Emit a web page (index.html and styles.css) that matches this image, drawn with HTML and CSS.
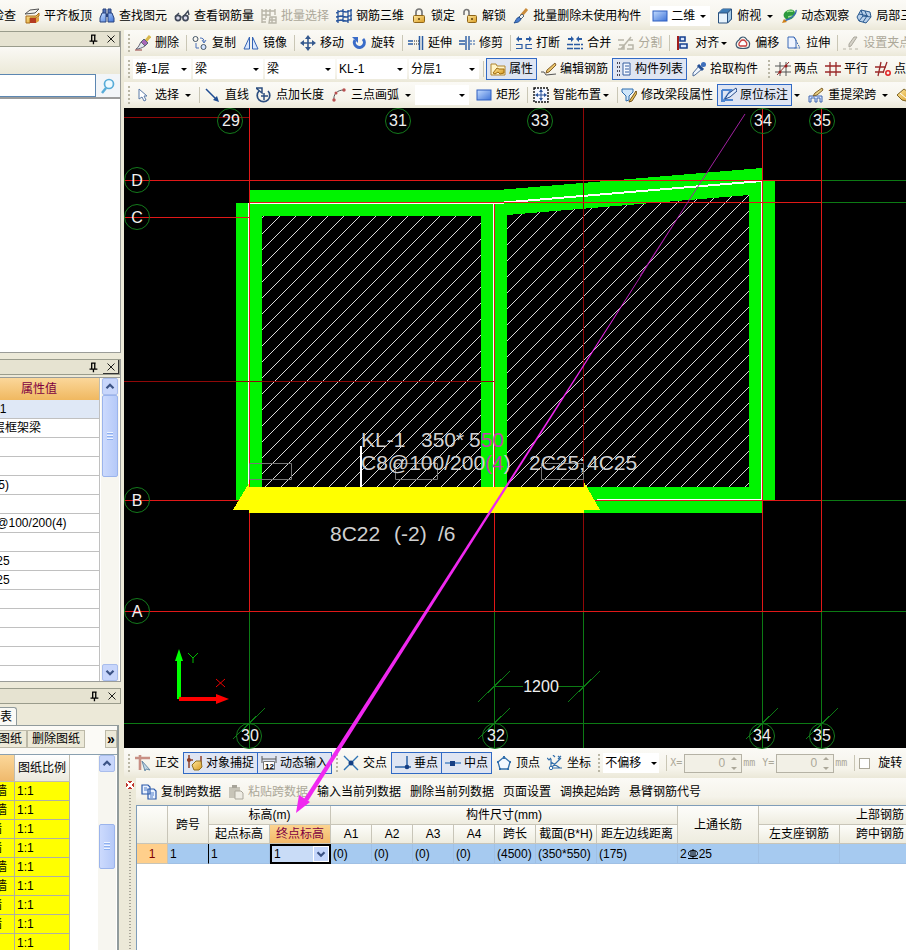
FILE: index.html
```html
<!DOCTYPE html>
<html lang="zh-CN">
<head>
<meta charset="utf-8">
<title>梁原位标注</title>
<link rel="stylesheet" href="styles.css">
</head>
<body>
<svg class="sprite" aria-hidden="true">
  <defs>
    <linearGradient id="blue" x1="0" y1="0" x2="1" y2="1"><stop offset="0" stop-color="#c4dcff"/><stop offset="1" stop-color="#3f74d8"/></linearGradient>
    <linearGradient id="gold" x1="0" y1="0" x2="1" y2="1"><stop offset="0" stop-color="#ffe9a0"/><stop offset="1" stop-color="#d89a20"/></linearGradient>
  </defs>
  <symbol id="slab" viewBox="0 0 16 16"><path d="M1 6l5-4 9-1-4 4z" fill="#f4f4f0" stroke="#555"/><path d="M2 8h10l3-3v3l-3 2H6v5H2z" fill="url(#gold)" stroke="#a86a18"/><path d="M6 10h6v5H6z" fill="#b43a20"/><path d="M12 10l3-1v4l-3 2z" fill="#e0a040"/></symbol>
  <symbol id="binoc" viewBox="0 0 16 16"><path d="M4 1h3v5H4zM9 1h3v5H9z" fill="#5272b8" stroke="#28427c"/><path d="M3 5h4v9H1v-4zM9 5h4l2 5v4H9z" fill="url(#blue)" stroke="#28427c"/><path d="M7 6h2v3H7z" fill="#28427c"/></symbol>
  <symbol id="glasses" viewBox="0 0 16 16"><path d="M1 9l4-4M10 8l4-5 1 4" stroke="#404858" stroke-width="1.4" fill="none"/><circle cx="4" cy="10" r="2.6" fill="#dde" stroke="#404858" stroke-width="1.6"/><circle cx="11.500" cy="10" r="2.600" fill="#dde" stroke="#404858" stroke-width="1.6"/><path d="M7 9h2" stroke="#404858"/></symbol>
  <symbol id="batch" viewBox="0 0 16 16"><path d="M1 1v14M5 1v9M9 1v7M1 3h13M1 7h8M1 11h4M1 14h4M14 1v6M9 9h6v6H8zM8 12h7M11 9v6" fill="none" stroke="#b8b5a8" stroke-width="1.4"/></symbol>
  <symbol id="mesh" viewBox="0 0 16 16"><path d="M2 2v13M7 1v13M12 2v13M15 1v12M0 5l5-2 5 1 6-2M0 9l5-1 5 1 6-2M0 13l5-1 5 1 6-2" fill="none" stroke="#28559c" stroke-width="1.3"/></symbol>
  <symbol id="lock" viewBox="0 0 16 16"><path d="M5 8V4a3 3 0 016 0v4" fill="none" stroke="#777" stroke-width="1.7"/><rect x="2.500" y="7.500" width="11" height="7" rx="1" fill="url(#gold)" stroke="#8e6418"/><path d="M8 10v2" stroke="#5b3c08" stroke-width="1.500"/></symbol>
  <symbol id="unlock" viewBox="0 0 16 16"><path d="M2 7V4a2.500 2.500 0 015 0v4" fill="none" stroke="#777" stroke-width="1.600"/><rect x="5.500" y="7.500" width="9" height="7" rx="1" fill="url(#gold)" stroke="#8e6418"/><path d="M10 10v2" stroke="#5b3c08" stroke-width="1.500"/></symbol>
  <symbol id="brush" viewBox="0 0 16 16"><path d="M14 1L8 8" stroke="#c98a3a" stroke-width="3"/><path d="M9 6l2 2-3 3-2-2z" fill="#eee" stroke="#567"/><path d="M6 9l2 2c-2 4-4 3-7 4 2-2 2-5 5-6z" fill="#4a7ed0" stroke="#24508f"/></symbol>
  <symbol id="rect" viewBox="0 0 16 16"><rect x="1" y="3" width="14" height="10" fill="url(#blue)" stroke="#2f5fc0"/></symbol>
  <symbol id="cube" viewBox="0 0 16 16"><path d="M1.500 5l4-4h9v10l-4 4h-9z" fill="#e8f3fc" stroke="#28507e"/><path d="M1.500 5l4-4h9l-4 4z" fill="#3c7ab4"/><path d="M1 5h9.500v10M10.500 5l4-4" fill="none" stroke="#28507e"/><path d="M10.500 5l4-4v10l-4 4z" fill="#a4c8e4" stroke="#28507e"/></symbol>
  <symbol id="orbit" viewBox="0 0 16 16"><path d="M4 4C8 0 14 1 14 5c0 5-5 8-9 6-3-2-3-5-1-7z" fill="#2c9a3c"/><path d="M6 4c2-2 4 0 6-1M7 9c2 0 4-2 6 0" stroke="#9be08c" stroke-width="1.500" fill="none"/><path d="M15 2c1 4-5 9-12 11" fill="none" stroke="#386ab0" stroke-width="1.400"/><path d="M1 15l2-4 3 3z" fill="#d08018"/></symbol>
  <symbol id="local3d" viewBox="0 0 16 16"><path d="M1 9l4-7 9 2 1 5-5 6-7-2z" fill="#b8d0ea" stroke="#28588e"/><path d="M5 2l2 6 8 1M7 8l-4 5M9 3l2 5-4 6M3 6l9 2" fill="none" stroke="#28588e"/></symbol>
  <symbol id="erase" viewBox="0 0 16 16"><path d="M15 1l-5 6" stroke="#d8b84c" stroke-width="3"/><path d="M9 4l4 4-3 3-4-4z" fill="#a868b8" stroke="#567"/><path d="M6 7l4 4c-3 2-6 3-9 3 3-2 3-4 5-7z" fill="#e0e8ee" stroke="#667"/><path d="M0 15h7" stroke="#913b3b"/></symbol>
  <symbol id="copy" viewBox="0 0 16 16"><circle cx="3.500" cy="4" r="2.500" fill="none" stroke="#456"/><circle cx="11.500" cy="12" r="2.500" fill="#d4e4ff" stroke="#456"/><path d="M8 3c3 0 4 1 4 4m-2-2l2 3 2-3M4 8v5h3" fill="none" stroke="#4a70b8"/></symbol>
  <symbol id="mirror" viewBox="0 0 16 16"><path d="M6.500 2v12H1zM9.500 2v12H15z" fill="#dbe9ff" stroke="#3564b4"/></symbol>
  <symbol id="move" viewBox="0 0 16 16"><path d="M8 2v12M2 8h12" stroke="#35598e" stroke-width="1.6"/><path d="M8 0l3 4H5zM8 16l3-4H5zM0 8l4-3v6zM16 8l-4-3v6z" fill="#35598e"/></symbol>
  <symbol id="rotate" viewBox="0 0 16 16"><path d="M4 5a5 5 0 108-1" fill="none" stroke="#3a6cc8" stroke-width="3"/><path d="M1 2h6v6z" fill="#3a6cc8"/></symbol>
  <symbol id="extend" viewBox="0 0 16 16"><path d="M0 6h5M0 9h5M14.500 1v14M11.500 1v14" stroke="#2a5ca4" stroke-width="1.500"/><path d="M6 6h5M6 9h5" stroke="#222" stroke-dasharray="1 1"/></symbol>
  <symbol id="trim" viewBox="0 0 16 16"><path d="M0 6h6M0 9h6M7 1v14M10 1v14" stroke="#2a5ca4" stroke-width="1.400"/><path d="M11 6h5M11 9h5" stroke="#2a5ca4" stroke-dasharray="2 1"/></symbol>
  <symbol id="break" viewBox="0 0 16 16"><path d="M0 4l3-3v2h3v2H3v2zM16 4l-3-3v2h-3v2h3v2z" fill="#2a5ca4"/><path d="M0 9.500h6v4H0M16 9.500h-6v4h6" fill="none" stroke="#2a5ca4" stroke-width="1.200"/></symbol>
  <symbol id="merge" viewBox="0 0 16 16"><path d="M7 4L4 1v2H1v2h3v2zM9 4l3-3v2h3v2h-3v2z" fill="#2a5ca4"/><path d="M0 9.500h16M0 13.500h16" fill="none" stroke="#2a5ca4" stroke-width="1.400" stroke-dasharray="6 1"/></symbol>
  <symbol id="split" viewBox="0 0 16 16"><path d="M0 5h6M10 5h5M1 10h5v4H0M10 10h5v4h-6M3 14L13 2" fill="none" stroke="#b8b5a8" stroke-width="1.500"/></symbol>
  <symbol id="align" viewBox="0 0 16 16"><path d="M3 1v14" stroke="#a01c1c" stroke-width="2"/><path d="M5 2h5v4H5zM5 9h7v4H5z" fill="#dce8ff" stroke="#17408f" stroke-width="1.600"/></symbol>
  <symbol id="offset" viewBox="0 0 16 16"><path d="M8 2c3 0 3 2 4 3 3 1 3 4 2 7-2 2-10 2-12 0-2-3 0-6 2-7 1-2 2-3 4-3z" fill="none" stroke="#3d5870" stroke-width="1.200"/><path d="M8 5c2 0 2 1 3 2 1 1 1 3 0 4H5c-2-1-1-3 0-4 1-1 1-2 3-2z" fill="#fff" stroke="#c83c3c" stroke-width="1.300"/></symbol>
  <symbol id="stretch" viewBox="0 0 16 16"><path d="M2 2h6l2 3v8H2z" fill="#eef4ff" stroke="#3a68b4"/><path d="M8 2l6 11H8" fill="none" stroke="#3a68b4" stroke-dasharray="2 1"/></symbol>
  <symbol id="grip" viewBox="0 0 16 16"><path d="M0 14h3M6 14h3M12 14h3" stroke="#b8b5a8"/><path d="M14 2l-6 9-2 1v-3l5-7z" fill="#d5d2c8" stroke="#aaa79c"/></symbol>
  <symbol id="props" viewBox="0 0 16 16"><path d="M1 3h5l1 2h8v9H1z" fill="#fff4c8" stroke="#b08430"/><path d="M3 12l4-5 2 1h5v4l-4 1-2-2-3 2z" fill="url(#gold)" stroke="#a06c10"/></symbol>
  <symbol id="edit" viewBox="0 0 16 16"><path d="M0 11h3l2 3 10-1" fill="none" stroke="#555"/><path d="M14 2L6 9l-1 3 3-1 7-7z" fill="#e8c468" stroke="#86602a"/></symbol>
  <symbol id="list" viewBox="0 0 16 16"><path d="M1 2h4M1 6h4M1 10h4M1 14h4" stroke="#445" stroke-width="2" stroke-dasharray="1 1"/><path d="M7 2h7v12H7z" fill="#f4f8ff" stroke="#345d9f"/><path d="M9 5h4M9 8h4M9 11h4" stroke="#345d9f"/></symbol>
  <symbol id="picker" viewBox="0 0 16 16"><path d="M8 5l3 3-7 6-2 1v-3z" fill="#eef5ff" stroke="#4e6c98"/><path d="M7 4l5 5M11 5l2-2" stroke="#244f94" stroke-width="3"/><circle cx="12.500" cy="3.500" r="2.500" fill="#3f70bc"/></symbol>
  <symbol id="twopt" viewBox="0 0 16 16"><path d="M0 5h16M0 11h16M5 1v14M11 1v14" stroke="#555"/><path d="M2 14L14 1" stroke="#8f3030"/><circle cx="11" cy="5" r="1.500" fill="#a02020"/><circle cx="5" cy="11" r="1.500" fill="#a02020"/></symbol>
  <symbol id="para" viewBox="0 0 16 16"><path d="M5 1v14M11 1v14" stroke="#9a2929" stroke-width="1.300"/><path d="M0 5h16M0 11h16" stroke="#9a2929" stroke-width="1.300"/></symbol>
  <symbol id="ptangle" viewBox="0 0 16 16"><path d="M6 1L3 15M0 6h11M0 11h9M12 1L8 12" stroke="#9a2929" stroke-width="1.300"/><circle cx="13" cy="12" r="2.200" fill="none" stroke="#e02020" stroke-width="1.500"/></symbol>
  <symbol id="select" viewBox="0 0 16 16"><path d="M4 2v10l3-2 2 4 2-1-2-4h3z" fill="#fff" stroke="#5a7aa8"/></symbol>
  <symbol id="line" viewBox="0 0 16 16"><path d="M1 2l10 10" stroke="#1f4c92" stroke-width="1.500"/><path d="M14 15l-6-2 4-4z" fill="#1f4c92"/></symbol>
  <symbol id="ptlen" viewBox="0 0 16 16"><path d="M3 4a6.300 6.300 0 109 0" fill="none" stroke="#2c4e80" stroke-width="1.700"/><path d="M0 1h6v5zM8 6v7M5 9h7" stroke="#2c4e80" fill="none" stroke-width="1.500"/></symbol>
  <symbol id="arc" viewBox="0 0 16 16"><path d="M3 14C2 7 6 3 13 3" fill="none" stroke="#555"/><circle cx="3" cy="13" r="1.700" fill="#b85050"/><circle cx="5" cy="6" r="1.500" fill="#b85050"/><circle cx="13" cy="3" r="1.700" fill="#b85050"/></symbol>
  <symbol id="smart" viewBox="0 0 16 16"><rect x="1" y="1" width="14" height="14" fill="#f5f8ff" stroke="#111" stroke-width="1.400" stroke-dasharray="2 1"/><path d="M8 4v8M4 8h8" stroke="#29539a"/><path d="M8 2l2 3H6zM8 14l2-3H6zM2 8l3-2v4zM14 8l-3-2v4z" fill="#29539a"/></symbol>
  <symbol id="modify" viewBox="0 0 16 16"><path d="M1 2h11v3L8 9v4l-3 1V9L1 5z" fill="#cfe6fa" stroke="#2c6cae"/><path d="M15 4l-6 9-1 2 3-1 5-8z" fill="#ecc65c" stroke="#70501a"/></symbol>
  <symbol id="insitu" viewBox="0 0 16 16"><path d="M1 3h9L3 13h9M1 3v11h3" fill="none" stroke="#4f86d0" stroke-width="2"/><path d="M15 1L7 7l-3 5 5-2 7-6z" fill="#ddebff" stroke="#2b4f8b"/></symbol>
  <symbol id="respan" viewBox="0 0 16 16"><path d="M1 15V9h13v6h-2v-4H9v4H7v-4H3v4z" fill="#d8e5ff" stroke="#4167b0"/><path d="M14 1L7 6l-2 3 4-1 6-5z" fill="#e9cf80" stroke="#80602a"/></symbol>
  <symbol id="paint" viewBox="0 0 16 16"><path d="M1 8l7-6 7 5-5 7-4-1z" fill="url(#gold)" stroke="#7c6224"/><path d="M4 6l7 6" stroke="#fff"/></symbol>
  <symbol id="ortho" viewBox="0 0 16 16"><path d="M0 3h15M5 0v15" stroke="#c88f84" stroke-width="2.600"/><path d="M7 6l8 9-4-1-1 2z" fill="#c2d8e8" stroke="#6a8ca8"/></symbol>
  <symbol id="snap" viewBox="0 0 16 16"><path d="M2 0v13M14 1v8M0 5h6" stroke="#904028" stroke-width="1.500"/><circle cx="2" cy="5" r="2" fill="#904028"/><path d="M5 10l4-4h5l1 6-3 3H7z" fill="url(#gold)" stroke="#8e7020"/></symbol>
  <symbol id="cross" viewBox="0 0 16 16"><path d="M1 1l14 14M15 1L1 15" stroke="#3174b4" stroke-width="1.400"/><circle cx="8" cy="8" r="2.500" fill="#143f84"/></symbol>
  <symbol id="perp" viewBox="0 0 16 16"><path d="M0 12h16M12 1v12" stroke="#2c63a8" stroke-width="1.500"/><circle cx="12" cy="12" r="2.300" fill="#173f84"/></symbol>
  <symbol id="mid" viewBox="0 0 16 16"><path d="M0 8h16" stroke="#4f86c4" stroke-width="1.500"/><path d="M5 6h5v5H5z" fill="#173f84"/></symbol>
  <symbol id="vertex" viewBox="0 0 16 16"><path d="M8 2l6 5-2 7H4L2 7z" fill="#f4f9ff" stroke="#3470ac" stroke-width="1.300"/><path d="M7 1h2v3H7zM1 6h2v2H1zM13 6h2v2h-2zM3 13h2v2H3zM11 13h2v2h-2z" fill="#3470ac"/></symbol>
  <symbol id="coord" viewBox="0 0 16 16"><path d="M4 4v11M2 13h13M4 13l9-9M4 7l9 6M11 1l3 3M14 1l-3 3M0 3l2 2 2-2M6 0l2 2" fill="none" stroke="#3470ac" stroke-width="1.200"/><circle cx="4" cy="13" r="1.700" fill="#fff" stroke="#3470ac"/></symbol>
  <symbol id="pages" viewBox="0 0 16 16"><path d="M1 1h6l2 2v7H1zM7 5h6l2 2v8H7z" fill="#eaf2ff" stroke="#2b59aa" stroke-width="1.200"/><path d="M3 4h3M3 6h4M9 9h4M9 11h4M9 13h3" stroke="#4e7cc8"/></symbol>
  <symbol id="paste" viewBox="0 0 16 16"><path d="M1 3h11v11H1z" fill="#c7c4b8"/><path d="M4 1h5v3H4z" fill="#a7a499"/><path d="M7 7h6l2 2v6H7z" fill="#eeece4" stroke="#aaa79c"/></symbol>
  <symbol id="search" viewBox="0 0 16 16"><circle cx="9" cy="6" r="4.500" fill="#eefaff" stroke="#58acd8" stroke-width="1.700"/><path d="M6 10l-4 5" stroke="#58acd8" stroke-width="2.500"/></symbol>
  <symbol id="pin" viewBox="0 0 16 16"><path d="M6.500 3v7M6 3.500h5M10 3v7M4 10.500h9M8.500 10v4" stroke="#000" stroke-width="1.500" fill="none"/></symbol>
  <symbol id="close" viewBox="0 0 16 16"><path d="M4 4l8 8M12 4l-8 8" stroke="#000"/></symbol>
  <symbol id="up" viewBox="0 0 16 16"><path d="M4 10l4-4 4 4" stroke="#3c5385" stroke-width="2.500" fill="none"/></symbol>
  <symbol id="down" viewBox="0 0 16 16"><path d="M4 6l4 4 4-4" stroke="#3c5385" stroke-width="2.500" fill="none"/></symbol>
</svg>

<div class="app">
  <nav class="bar bar-top" aria-label="视图">
    <button class="tool cut">检查</button>
    <button class="tool"><svg><use href="#slab"/></svg>平齐板顶</button>
    <button class="tool"><svg><use href="#binoc"/></svg>查找图元</button>
    <button class="tool"><svg><use href="#glasses"/></svg>查看钢筋量</button>
    <button class="tool" disabled><svg><use href="#batch"/></svg>批量选择</button>
    <button class="tool"><svg><use href="#mesh"/></svg>钢筋三维</button>
    <button class="tool"><svg><use href="#lock"/></svg>锁定</button>
    <button class="tool"><svg><use href="#unlock"/></svg>解锁</button>
    <button class="tool"><svg><use href="#brush"/></svg>批量删除未使用构件</button>
    <span class="combo view"><svg><use href="#rect"/></svg><select aria-label="视图模式"><option>二维</option></select></span>
    <button class="tool"><svg><use href="#cube"/></svg>俯视<i class="drop wide"></i></button>
    <button class="tool"><svg><use href="#orbit"/></svg>动态观察</button>
    <button class="tool"><svg><use href="#local3d"/></svg>局部三维</button>
  </nav>

  <aside class="side">
    <section class="panel panel-search">
      <header class="caption"><button aria-label="固定"><svg><use href="#pin"/></svg></button><button aria-label="关闭"><svg><use href="#close"/></svg></button></header>
      <div class="panel-tools"></div>
      <form class="search"><input type="text" aria-label="搜索构件"><button type="button" aria-label="搜索"><svg><use href="#search"/></svg></button></form>
      <div class="blank"></div>
    </section>

    <section class="panel panel-props">
      <header class="caption"><button aria-label="固定"><svg><use href="#pin"/></svg></button><button class="raised" aria-label="关闭"><svg><use href="#close"/></svg></button></header>
      <div class="scrolled">
        <div class="clip">
          <table class="props">
            <thead><tr><th>属性值</th></tr></thead>
            <tbody>
              <tr class="picked"><td>KL-1</td></tr><tr><td>楼层框架梁</td></tr><tr><td></td></tr><tr><td></td></tr>
              <tr><td>(175)</td></tr><tr><td></td></tr><tr><td>C8@100/200(4)</td></tr><tr><td></td></tr>
              <tr><td>2C25</td></tr><tr><td>4C25</td></tr><tr><td></td></tr><tr><td></td></tr><tr><td></td></tr><tr><td></td></tr><tr><td></td></tr>
            </tbody>
          </table>
        </div>
        <div class="scroll"><button aria-label="向上"><svg><use href="#up"/></svg></button><div class="thumb tall"></div><div class="track"></div><button aria-label="向下"><svg><use href="#down"/></svg></button></div>
      </div>
    </section>

    <section class="panel panel-sheets">
      <header class="caption"><button aria-label="固定"><svg><use href="#pin"/></svg></button><button aria-label="关闭"><svg><use href="#close"/></svg></button></header>
      <div class="tabs"><button>图纸列表</button></div>
      <div class="sheet-box">
        <div class="sheet-tools"><button class="left">添加图纸</button><button>删除图纸</button><button class="more">»</button></div>
        <div class="scrolled">
          <div class="clip">
            <table class="sheets">
              <thead><tr><th class="hot"></th><th>图纸比例</th></tr></thead>
              <tbody>
                <tr><td>墙</td><td>1:1</td></tr><tr><td>墙</td><td>1:1</td></tr>
                <tr><td class="short">墙</td><td>1:1</td></tr><tr><td class="short">墙</td><td>1:1</td></tr>
                <tr><td>墙</td><td>1:1</td></tr><tr><td>墙</td><td>1:1</td></tr>
                <tr><td class="short">墙</td><td>1:1</td></tr><tr><td class="short">墙</td><td>1:1</td></tr>
                <tr><td></td><td>1:1</td></tr>
              </tbody>
            </table>
          </div>
          <div class="scroll"><button aria-label="向上"><svg><use href="#up"/></svg></button><div class="track lead"></div><div class="thumb"></div><div class="track"></div></div>
        </div>
      </div>
    </section>
  </aside>

  <main class="work">
    <nav class="bar" aria-label="修改">
      <i class="dots"></i>
      <button class="tool"><svg><use href="#erase"/></svg>删除</button><i class="sep"></i>
      <button class="tool"><svg><use href="#copy"/></svg>复制</button>
      <button class="tool"><svg><use href="#mirror"/></svg>镜像</button><i class="sep"></i>
      <button class="tool"><svg><use href="#move"/></svg>移动</button>
      <button class="tool"><svg><use href="#rotate"/></svg>旋转</button><i class="sep"></i>
      <button class="tool"><svg><use href="#extend"/></svg>延伸</button>
      <button class="tool"><svg><use href="#trim"/></svg>修剪</button><i class="sep"></i>
      <button class="tool"><svg><use href="#break"/></svg>打断</button>
      <button class="tool"><svg><use href="#merge"/></svg>合并</button>
      <button class="tool" disabled><svg><use href="#split"/></svg>分割</button><i class="sep"></i>
      <button class="tool"><svg><use href="#align"/></svg>对齐<i class="drop"></i></button>
      <button class="tool"><svg><use href="#offset"/></svg>偏移</button>
      <button class="tool"><svg><use href="#stretch"/></svg>拉伸</button><i class="sep"></i>
      <button class="tool" disabled><svg><use href="#grip"/></svg>设置夹点</button>
    </nav>

    <nav class="bar bar-pick" aria-label="构件">
      <i class="dots"></i>
      <span class="combo floor"><select aria-label="楼层"><option>第-1层</option></select></span>
      <span class="combo"><select aria-label="构件类别"><option>梁</option></select></span>
      <span class="combo"><select aria-label="构件类型"><option>梁</option></select></span>
      <span class="combo"><select aria-label="构件名称"><option>KL-1</option></select></span>
      <span class="combo"><select aria-label="分层"><option>分层1</option></select></span>
      <i class="sep"></i>
      <button class="tool on"><svg><use href="#props"/></svg>属性</button>
      <button class="tool"><svg><use href="#edit"/></svg>编辑钢筋</button>
      <button class="tool on"><svg><use href="#list"/></svg>构件列表</button>
      <button class="tool"><svg><use href="#picker"/></svg>拾取构件</button>
      <i class="dots mid"></i>
      <button class="tool"><svg><use href="#twopt"/></svg>两点</button>
      <button class="tool"><svg><use href="#para"/></svg>平行</button>
      <button class="tool"><svg><use href="#ptangle"/></svg>点角</button>
    </nav>

    <nav class="bar bar-draw" aria-label="绘图">
      <i class="dots"></i>
      <button class="tool"><svg><use href="#select"/></svg>选择<i class="drop wide"></i></button><i class="sep"></i>
      <button class="tool"><svg><use href="#line"/></svg>直线</button>
      <button class="tool"><svg><use href="#ptlen"/></svg>点加长度</button>
      <button class="tool"><svg><use href="#arc"/></svg>三点画弧<i class="drop wide"></i></button>
      <span class="combo shape"><select aria-label="画法"><option></option></select></span>
      <button class="tool"><svg><use href="#rect"/></svg>矩形</button><i class="sep"></i>
      <button class="tool"><svg><use href="#smart"/></svg>智能布置<i class="drop"></i></button><i class="sep tight"></i>
      <button class="tool"><svg><use href="#modify"/></svg>修改梁段属性</button>
      <button class="tool on"><svg><use href="#insitu"/></svg>原位标注</button><button class="tool" aria-label="原位标注选项"><i class="drop"></i></button>
      <button class="tool"><svg><use href="#respan"/></svg>重提梁跨<i class="drop wide"></i></button>
      <button class="tool" aria-label="格式刷"><svg><use href="#paint"/></svg></button>
    </nav>

    <div class="canvas">
      <svg viewBox="124 108 782 640" preserveAspectRatio="xMinYMin meet" role="img" aria-label="梁平面图">
        <defs><pattern id="hatch" width="16" height="16" patternUnits="userSpaceOnUse"><path d="M-1 17L17 -1" stroke="#d8d8d8" stroke-width="1" shape-rendering="crispEdges"/></pattern></defs>
        <g shape-rendering="crispEdges">
          <path d="M262 216H481V487H262zM507 215L749 195V487H507z" fill="url(#hatch)"/>
          <path class="beam" d="M249 190H498L762 168V181H775V500H762V513H584V487H749V195L507 215V487H481V216H262V487H249V500H236V203H249z"/>
          <path d="M248 203h1v284h-1zM249 203h249v1H249zM493 204h1v283h-1zM761 181h1v319h-1zM597 499h165v1H597z" fill="#fff"/>
          <path d="M498 203L762 181" class="white thick"/>
        </g>
        <g shape-rendering="crispEdges">
          <g class="axis dark">
            <rect x="124" y="117" width="125" height="1"/><rect x="124" y="381" width="370" height="1"/><rect x="583" y="108" width="1" height="503"/>
          </g>
          <g class="axis">
            <rect x="124" y="180" width="698" height="1"/><rect x="124" y="217" width="125" height="1"/><rect x="249" y="202" width="573" height="1"/>
            <rect x="124" y="500" width="125" height="1"/><rect x="583" y="500" width="239" height="1"/><rect x="124" y="611" width="698" height="1"/>
            <rect x="249" y="108" width="1" height="503"/><rect x="494" y="204" width="1" height="407"/><rect x="762" y="108" width="1" height="503"/><rect x="821" y="108" width="1" height="503"/>
          </g>
          <g class="guide">
            <rect x="822" y="180" width="84" height="1"/><rect x="822" y="202" width="84" height="1"/><rect x="822" y="500" width="84" height="1"/><rect x="822" y="611" width="84" height="1"/>
            <rect x="249" y="612" width="1" height="136"/><rect x="494" y="612" width="1" height="136"/><rect x="583" y="612" width="1" height="136"/><rect x="762" y="612" width="1" height="136"/><rect x="821" y="612" width="1" height="136"/>
            <rect x="124" y="723" width="698" height="1"/><rect x="494" y="686" width="29" height="1"/><rect x="558" y="686" width="26" height="1"/>
          </g>
          <path class="tick" d="M233 739L265 708M478 702L510 671M568 702L600 671M478 739L510 708M746 739L778 708M806 739L838 708"/>
        </g>
        <g class="bubbles">
          <circle cx="230" cy="121" r="12.500"/><circle cx="398" cy="121" r="12.500"/><circle cx="540" cy="121" r="12.500"/><circle cx="763" cy="121" r="12.500"/><circle cx="822" cy="121" r="12.500"/>
          <circle cx="137" cy="180" r="12.500"/><circle cx="137" cy="217" r="12.500"/><circle cx="137" cy="500" r="12.500"/><circle cx="137" cy="611" r="12.500"/>
          <circle cx="249" cy="736" r="12.500"/><circle cx="495" cy="736" r="12.500"/><circle cx="762" cy="736" r="12.500"/><circle cx="822" cy="736" r="12.500"/>
        </g>
        <g class="marks">
          <text x="231" y="126">29</text><text x="398" y="126">31</text><text x="540" y="126">33</text><text x="763" y="126">34</text><text x="822" y="126">35</text>
          <text x="137" y="186">D</text><text x="137" y="223">C</text><text x="137" y="506">B</text><text x="137" y="617">A</text>
          <text x="250" y="741">30</text><text x="496" y="741">32</text><text x="762" y="741">34</text><text x="822" y="741">35</text>
          <text x="541" y="692">1200</text>
        </g>
        <path d="M249.500 463.500H291.500V479.500H249.500zM395.500 463.500H437.500V479.500H395.500zM541.500 463.500H583.500V479.500H541.500z" fill="none" stroke="#777"/>
        <path d="M361 446V487" stroke="#fff" stroke-width="2"/>
        <g class="notes">
          <text x="361" y="447">KL-1</text><text x="421" y="447">350*</text><text x="469" y="447">5<tspan class="pink">50</tspan></text>
          <text x="361" y="470">C8@100/200</text><text x="485" y="470"><tspan class="pink">(4</tspan>)</text><text x="529" y="470">2C25;</text><text x="587" y="470">4C25</text>
          <text x="330" y="541">8C22</text><text x="394" y="541">(-2)</text><text x="438" y="541">/6</text>
        </g>
        <path d="M249 487V483L233 510H249V513H584V510H600L584 482V487z" fill="#ff0" shape-rendering="crispEdges"/>
        <path d="M179 699V656" stroke="#0f0" stroke-width="4"/><path d="M179 649L183 661H175z" fill="#0f0"/>
        <path d="M179 699H218" stroke="#f00" stroke-width="4"/><path d="M229 699L216 694V704z" fill="#f00"/>
        <path d="M188 653L193 658L198 653M193 658V663" fill="none" stroke="#0b0"/><path d="M216 679L225 687M225 679L216 687" stroke="#e00"/>
        <path d="M745 114L640 276" stroke="#a020a0" stroke-width="1" fill="none"/>
        <path d="M690 199L308 801L304 799z" fill="#f028f0"/>
        <path d="M296 813L299 795L310 802z" fill="#f028f0"/>
      </svg>
    </div>

    <nav class="bar bar-snap" aria-label="捕捉">
      <i class="dots"></i>
      <button class="tool"><svg><use href="#ortho"/></svg>正交</button>
      <button class="tool on"><svg><use href="#snap"/></svg>对象捕捉</button>
      <button class="tool on next"><svg viewBox="0 0 16 16"><path d="M1 1v7M15 1v7M1 4h14" stroke="#555"/><path d="M2.500 6.500h11v8h-11z" fill="#fff" stroke="#777"/><text x="4" y="14" class="icon-text">12</text></svg>动态输入</button>
      <i class="dots"></i>
      <button class="tool"><svg><use href="#cross"/></svg>交点</button>
      <button class="tool on"><svg><use href="#perp"/></svg>垂点</button>
      <button class="tool on next"><svg><use href="#mid"/></svg>中点</button>
      <button class="tool"><svg><use href="#vertex"/></svg>顶点</button>
      <button class="tool"><svg><use href="#coord"/></svg>坐标</button>
      <i class="dots"></i>
      <span class="combo shift"><select aria-label="偏移方式"><option>不偏移</option></select></span>
      <i class="sep tight"></i>
      <label class="coord">X=<span class="spin"><input type="text" value="0" disabled></span>mm</label>
      <label class="coord">Y=<span class="spin"><input type="text" value="0" disabled></span>mm</label>
      <i class="sep tight"></i>
      <label class="check"><input type="checkbox">旋转</label>
    </nav>

    <section class="dock">
      <div class="handle"><button aria-label="关闭"></button></div>
      <div class="dock-body">
        <nav class="bar bar-data" aria-label="跨数据">
          <button class="tool"><svg><use href="#pages"/></svg>复制跨数据</button>
          <button class="tool" disabled><svg><use href="#paste"/></svg>粘贴跨数据</button>
          <button class="tool text">输入当前列数据</button><button class="tool text">删除当前列数据</button><button class="tool text">页面设置</button><button class="tool text">调换起始跨</button><button class="tool text">悬臂钢筋代号</button>
        </nav>
        <div class="data-wrap">
          <table class="data">
            <colgroup><col class="w31"><col class="w41"><col class="w61"><col class="w61"><col class="w41"><col class="w41"><col class="w41"><col class="w41"><col class="w41"><col class="w61"><col class="w81"><col class="w81"><col class="w81"><col class="w81"><col class="w81"></colgroup>
            <thead>
              <tr><th rowspan="2"></th><th rowspan="2">跨号</th><th colspan="2">标高(m)</th><th colspan="7">构件尺寸(mm)</th><th rowspan="2">上通长筋</th><th colspan="3">上部钢筋</th></tr>
              <tr><th>起点标高</th><th class="hot">终点标高</th><th>A1</th><th>A2</th><th>A3</th><th>A4</th><th>跨长</th><th>截面(B*H)</th><th>距左边线距离</th><th>左支座钢筋</th><th>跨中钢筋</th><th>右支座钢筋</th></tr>
            </thead>
            <tbody>
              <tr><th scope="row">1</th><td>1</td><td>1</td><td class="active"><span class="cell"><select aria-label="终点标高"><option>1</option></select><svg><use href="#down"/></svg></span></td><td>(0)</td><td>(0)</td><td>(0)</td><td>(0)</td><td>(4500)</td><td>(350*550)</td><td>(175)</td><td>2<svg class="rebar" viewBox="0 0 12 12"><path d="M6 1V11M1 10.500H11M4 3v5M8 3v5" stroke="#000"/><ellipse cx="6" cy="5.500" rx="4.500" ry="3" fill="none" stroke="#000"/></svg>25</td><td></td><td></td><td></td></tr>
            </tbody>
          </table>
        </div>
      </div>
    </section>
  </main>
</div>
</body>
</html>
```
FILE: styles.css
```css
* { box-sizing: border-box; }
body {
  margin: 0;
  background: #ece9d8;
  color: #000;
  font: 12px/16px "Liberation Sans", "Noto Sans CJK SC", sans-serif;
  overflow: hidden;
}
button, input, select { font: inherit; color: inherit; margin: 0; padding: 0; border: 0; background: none; border-radius: 0; }
select { appearance: none; outline: 0; }
table { border-collapse: separate; border-spacing: 0; table-layout: fixed; }
th { font-weight: normal; }
.sprite { position: absolute; width: 0; height: 0; }
.icon-text { font: bold 8px "Liberation Sans", sans-serif; }

.app {
  display: grid;
  grid-template: 30px minmax(0, 1fr) / 121px minmax(0, 1fr);
  column-gap: 3px;
  height: 100vh;
}

/* Toolbars */
.bar {
  display: flex;
  align-items: center;
  gap: 7px;
  flex: none;
  height: 26px;
  padding-left: 4px;
  overflow: hidden;
  white-space: nowrap;
  background: linear-gradient(#fbfaf6, #f5f3ea 70%, #ebe8d8);
}
.bar > * { flex: none; }
.bar-top { grid-column: 1 / -1; height: 30px; padding: 2px 0 0; }
.tool { display: inline-flex; align-items: center; gap: 4px; height: 22px; }
.tool svg, .combo > svg, .search svg { width: 16px; height: 16px; flex: none; }
.tool:disabled { color: #aca899; }
.tool.cut { margin: 0 1px 0 -8px; }
.tool.on { gap: 3px; margin: 0 -3px; padding: 0 3px; border: 1px solid #316ac5; background: #dfe5f2; }
.tool.on.next { margin-left: -5px; }
.tool.text { margin-left: 2px; }
.drop { width: 8px; height: 8px; display: inline-flex; align-items: center; justify-content: center; margin-left: -3px; }
.drop.wide { width: 13px; margin-left: -4px; padding-left: 4px; }
.drop::after, .combo::after { content: ""; border: 3px solid transparent; border-top-color: #000; border-bottom: 0; }
.sep { width: 1px; height: 16px; margin-right: -2px; background: #c9c6b5; }
.sep.tight { margin-right: -4px; }
.dots { width: 2px; height: 18px; margin-right: -2px; background: repeating-linear-gradient(#bab7a6 0 2px, transparent 2px 4px); }
.dots.mid { margin-left: 3px; }
.combo { display: inline-flex; align-items: center; width: 70px; height: 20px; padding: 0 4px 0 2px; background: #fff; }
.combo select { flex: 1; min-width: 0; height: 16px; }
.combo.view { width: 60px; margin-left: 2px; gap: 3px; }
.combo.floor { width: 58px; margin-left: -2px; }
.combo.shape { width: 54px; margin-left: -4px; }
.combo.shift { width: 56px; margin-left: -2px; padding-right: 2px; }
.bar-pick .combo + .combo { margin-left: -5px; }
.bar-pick .sep { margin-left: -3px; }
.bar-pick .tool { gap: 3px; }
.bar-snap { height: 30px; }
.coord { display: inline-flex; align-items: center; color: #aca899; font: 10px/16px "DejaVu Sans Mono", monospace; }
.spin { display: inline-flex; align-items: center; width: 58px; height: 19px; margin: 0 1px 0 2px; border: 1px solid #b5b2a5; background: #f2f0e6; }
.spin input { width: 40px; text-align: right; font: 12px/16px "Liberation Sans", sans-serif; }
.spin::before, .spin::after { content: ""; border: 3px solid transparent; order: 1; }
.spin::before { border-bottom-color: #aca899; border-top: 0; margin: -10px -6px 0 6px; }
.spin::after { border-top-color: #aca899; border-bottom: 0; margin-top: 10px; }
.check { display: inline-flex; align-items: center; gap: 8px; margin-left: 1px; }
.check input { appearance: none; width: 11px; height: 11px; border: 1px solid #aca899; background: #fff; }

/* Left panels */
.side { display: flex; flex-direction: column; gap: 6px; padding-top: 1px; min-height: 0; overflow: hidden; }
.panel { display: flex; flex-direction: column; border-right: 1px solid #9a9c98; min-height: 0; }
.panel-search { flex: 1; border-bottom: 1px solid #9a9c98; }
.panel-props { flex: 0 0 323px; border-bottom: 1px solid #9a9c98; }
.panel-sheets { flex: 0 0 262px; border: 0; }
.caption { display: flex; justify-content: flex-end; flex: none; height: 16px; gap: 2px; border: 1px solid #9a9c8c; border-left: 0; background: #e6e3d1; }
.caption button { width: 16px; height: 14px; }
.caption svg { display: block; width: 16px; height: 14px; }
.caption .raised { border-right: 1px solid #333; border-bottom: 1px solid #333; }
.panel-tools { height: 27px; background: linear-gradient(#faf9f5, #ece9d8); }
.search { display: flex; height: 25px; border-bottom: 2px solid #9b9c9c; background: #ece9d8; }
.search input { flex: 1; min-width: 0; border: 1px solid #5c87b2; border-left: 0; background: #fff; }
.search button { width: 24px; display: grid; place-items: center; background: #f2f5f8; }
.blank { flex: 1; background: #fff; }
.scrolled { display: flex; flex: 1; min-height: 0; overflow: hidden; background: #fff; }
.clip { flex: 1; min-width: 0; overflow: hidden; }
.panel-props .scrolled { margin-top: 2px; border-top: 1px solid #9a9c98; }
.props { width: 121px; margin-left: -21px; }
.props th { height: 22px; padding: 0; background: linear-gradient(#fbd79a, #f0b860); color: #800040; border-right: 1px solid #c0bdb0; }
.props td { height: 19px; padding: 0 2px; line-height: 16px; border-right: 1px solid #c0c0c0; border-bottom: 1px solid #c0c0c0; white-space: nowrap; }
.picked { background: #dfe8f6; }
.scroll { display: flex; flex-direction: column; flex: none; width: 18px; margin-right: 1px; padding: 0 1px; background: #f7f6f0; }
.scroll button { height: 17px; border: 1px solid #a9bdec; border-radius: 2px; background: #c8d6fb; }
.scroll svg { display: block; width: 14px; height: 15px; }
.thumb { height: 45px; border: 1px solid #9bb4ec; border-radius: 2px; background: repeating-linear-gradient(#eef4ff 0 1px, #8caff0 1px 2px, transparent 2px 3px) center / 6px 9px no-repeat, linear-gradient(90deg, #ccdafd, #b5c9f8); }
.thumb.tall { height: 82px; }
.track { flex: 1; }
.track.lead { flex: 0 0 52px; }
.tabs { height: 21px; padding-top: 3px; }
.tabs button { height: 18px; margin-left: -38px; padding: 0 4px 0 1px; border: 1px solid #919b9c; border-bottom: 0; border-radius: 0 3px 0 0; background: #fafaf6; }
.sheet-box { display: flex; flex-direction: column; flex: 1; min-height: 0; margin-right: 2px; border: 1px solid #919b9c; border-width: 1px 2px 0 0; background: #fbfaf6; }
.sheet-tools { display: flex; flex: none; height: 29px; padding: 4px 0 6px; border-bottom: 1px solid #8aa0b0; }
.sheet-tools button { flex: none; padding: 0 4px; border: 1px solid #bcb9a8; background: #ece9d8; }
.sheet-tools .left { margin-left: -31px; }
.sheet-tools .more { margin-left: auto; width: 12px; padding: 0; font-weight: bold; font-size: 14px; line-height: 14px; }
.sheets { width: 92px; margin-left: -22px; }
.sheets th { height: 27px; padding: 0; border-right: 1px solid #c0bdb0; border-bottom: 1px solid #c0bdb0; background: linear-gradient(#fff, #ebe9dc); }
.sheets th:first-child { width: 37px; }
.sheets .hot { background: linear-gradient(#fbd79a, #efb96c); }
.sheets td { height: 19px; padding: 0 2px; background: #ff0; border-right: 1px solid #b0b0a0; border-bottom: 1px solid #b0b0a0; }
.sheets td:first-child { padding: 0 7px 0 0; text-align: right; }
.sheets td.short:first-child { padding-right: 12px; }

/* Drawing area */
.work { display: flex; flex-direction: column; min-height: 0; }
.canvas { flex: 1; min-height: 0; background: #000; position: relative; z-index: 1; pointer-events: none; }
.canvas svg { display: block; width: 100%; height: 100%; overflow: visible; }
.beam { fill: #00f400; }
.white { stroke: #fff; fill: none; }
.thick { stroke-width: 2; }
.axis { fill: #e01818; }
.axis.dark { fill: #900808; }
.guide { fill: #0c7a14; }
.tick { stroke: #0c7a14; fill: none; }
.bubbles { fill: none; stroke: #147a1c; stroke-width: 1; }
.marks { fill: #f0f0f0; font: 16px "Liberation Sans", sans-serif; text-anchor: middle; }
.notes { fill: #d0d0d0; font: 21px "Liberation Sans", sans-serif; }
.pink { fill: #c040b0; }

/* Span data */
.dock { display: flex; flex: 0 0 172px; min-height: 0; overflow: hidden; }
.handle { flex: none; width: 12px; padding: 3px 2px; background: repeating-linear-gradient(#a8a598 0 1px, transparent 1px 3px) 5px 14px / 2px 100% no-repeat; }
.handle button { display: block; width: 8px; height: 8px; border-radius: 2px; background: linear-gradient(45deg, transparent 43%, #fff 43% 57%, transparent 57%), linear-gradient(-45deg, transparent 43%, #fff 43% 57%, transparent 57%), #c03830; }
.dock-body { flex: 1; min-width: 0; display: flex; flex-direction: column; }
.bar-data { height: 27px; padding-left: 5px; }
.data-wrap { flex: 1; overflow: hidden; background: #fff; border: 1px solid #7f9db9; border-width: 1px 0 0 1px; }
.data { width: 865px; }
.w31 { width: 31px; }
.w41 { width: 41px; }
.w61 { width: 61px; }
.w81 { width: 81px; }
.data th, .data td { height: 19px; padding: 0; white-space: nowrap; border-right: 1px solid #c8c5b8; border-bottom: 1px solid #c8c5b8; }
.data thead th { background: linear-gradient(#fdfdfa, #eeecdf); }
.data thead .hot { background: linear-gradient(#fbd490, #f3b868); color: #800040; }
.data tbody th { background: #ffcf8b; color: #800000; }
.data tbody td { padding: 0 2px; background: #a6caf0; border-color: #a0c0e4; }
.data tbody td:nth-child(2) { border-right-color: #000; }
.data tbody .active { padding: 0; border: 2px solid #000; background: #c9dcf7; }
.cell { display: flex; align-items: center; height: 16px; padding-left: 2px; }
.cell select { flex: 1; min-width: 0; }
.cell svg { flex: none; width: 16px; height: 16px; border: 1px solid #fff; background: #c4d6fb; }
.rebar { width: 12px; height: 12px; vertical-align: -2px; }
```
